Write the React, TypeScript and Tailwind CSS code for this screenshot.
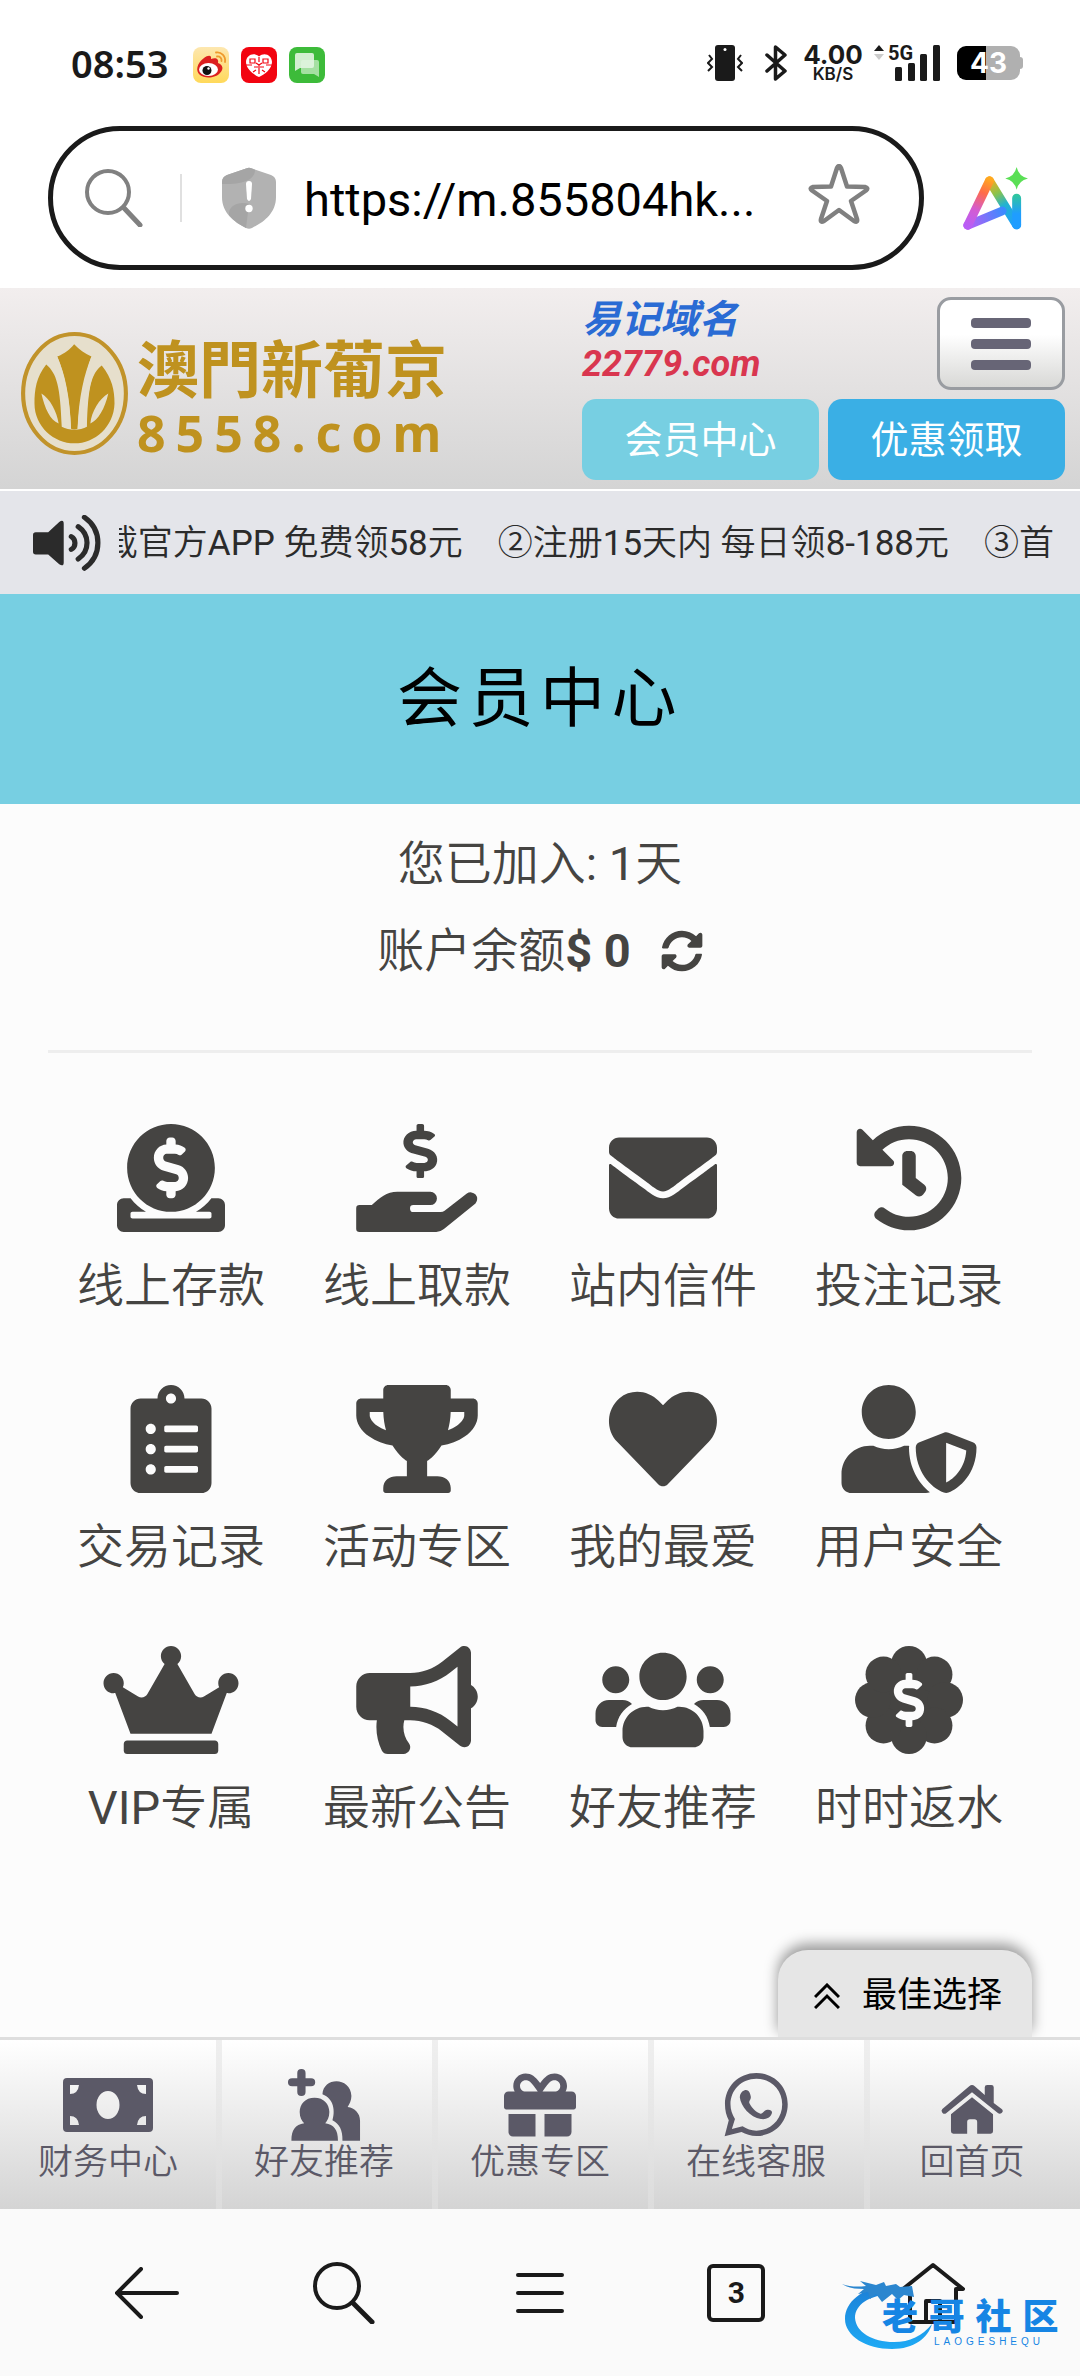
import type { ReactNode } from "react";
import {
  FaBullhorn,
  FaClipboardList,
  FaCrown,
  FaDonate,
  FaEnvelope,
  FaGift,
  FaHeart,
  FaHistory,
  FaSyncAlt,
  FaTrophy,
  FaUsers,
  FaUserShield,
} from "react-icons/fa";

const DOLLAR =
  "M209.2 233.4l-108-31.6C88.7 198.2 80 186.5 80 173.5c0-16.3 13.2-29.5 29.5-29.5h66.3c12.2 0 24.2 3.7 34.2 10.5 6.1 4.1 14.3 3.1 19.5-2l34.8-34c7.1-6.9 6.1-18.4-1.8-24.5C238 74.800 207.400 64.100 176 64V16c0-8.800-7.200-16-16-16h-32c-8.800 0-16 7.200-16 16v48h-2.500C45.800 64-5.400 118.700.500 183.600c4.200 46.100 39.400 83.600 83.800 96.600l102.500 30c12.500 3.700 21.200 15.300 21.200 28.300 0 16.300-13.200 29.500-29.500 29.500h-66.300C100 368 88 364.300 78 357.500c-6.100-4.100-14.300-3.100-19.500 2l-34.800 34c-7.100 6.900-6.100 18.400 1.800 24.500 24.500 19.200 55.100 29.900 86.500 30v48c0 8.800 7.200 16 16 16h32c8.800 0 16-7.200 16-16v-48.200c46.600-.900 90.300-28.600 105.700-72.700 21.500-61.600-14.600-124.800-72.500-141.700z";

/** Sets Chinese runs in the lighter cut while Latin letters and digits stay regular. */
function Mixed({ text }: { text: string }) {
  return (
    <>
      {text.split(/([A-Za-z0-9:\-]+)/).map((part, i) =>
        i % 2 === 1 ? (
          <span key={i} className="font-normal">
            {part}
          </span>
        ) : (
          part
        ),
      )}
    </>
  );
}

function HandDollar({ className }: { className?: string }) {
  return (
    <svg viewBox="948 132 366 325" className={className} fill="currentColor" aria-hidden="true">
      <g transform="translate(1090 132) scale(0.354 0.318)">
        <path d={DOLLAR} />
      </g>
      <path d="M958 376H995C1018 355 1040 336 1072 336H1171A20 20 0 0 1 1171 376H1120Q1110 376 1110 386Q1110 397 1120 397H1202Q1209 397 1214 393L1281 341A20 20 0 0 1 1307 371L1212 448Q1201 457 1189 457H958Q948 457 948 447V386Q948 376 958 376Z" />
    </svg>
  );
}

function BadgeDollar({ className }: { className?: string }) {
  return (
    <svg viewBox="0 0 512 512" className={className} fill="currentColor" aria-hidden="true">
      <circle cx="256" cy="256" r="180" />
      <circle cx="256" cy="85" r="85" />
      <circle cx="377" cy="135" r="85" />
      <circle cx="427" cy="256" r="85" />
      <circle cx="377" cy="377" r="85" />
      <circle cx="256" cy="427" r="85" />
      <circle cx="135" cy="377" r="85" />
      <circle cx="85" cy="256" r="85" />
      <circle cx="135" cy="135" r="85" />
      <path d={DOLLAR} fill="#fcfcfc" transform="translate(184 128) scale(0.5)" />
    </svg>
  );
}

function StatusBar() {
  return (
    <div className="flex h-[126px] items-center justify-between bg-white pr-[57px] pl-[71px] text-[#1a1a1a]">
      <div className="flex items-center">
        <span className="mr-[25px] font-['Noto_Sans',sans-serif] text-[38px] leading-none font-semibold">08:53</span>
        <div className="flex gap-3">
          <svg viewBox="0 0 36 36" className="mt-1 size-9" aria-hidden="true">
            <defs>
              <linearGradient id="wb" x1="0" y1="0" x2="0" y2="1">
                <stop offset="0" stopColor="#fde7b0" />
                <stop offset="1" stopColor="#ffd95a" />
              </linearGradient>
            </defs>
            <rect width="36" height="36" rx="8" fill="url(#wb)" />
            <path d="M11 11C15 8 19 8 18 12C23 10 26 12 25 16C30 18 31 22 27 26C23 31 12 32 7 28C2 24 4 16 11 11Z" fill="#dc1f1f" />
            <ellipse cx="15.500" cy="22.500" rx="9.500" ry="6.500" fill="#fff" />
            <circle cx="14" cy="23.500" r="4.500" fill="#111" />
            <circle cx="15.500" cy="21.500" r="1.200" fill="#fff" />
            <path d="M23 5.500C28 4.500 33 9 32 15M24 9.500C27 9 29 11.500 28.500 14" fill="none" stroke="#ef9a2d" strokeWidth="1.800" strokeLinecap="round" />
          </svg>
          <svg viewBox="0 0 36 36" className="mt-1 size-9" aria-hidden="true">
            <rect width="36" height="36" rx="8" fill="#f20410" />
            <path d="M18 9.500C23 4.500 31 8 31 15C31 22 23 28 18 30C13 28 5 22 5 15C5 8 13 4.500 18 9.500Z" fill="#fff" />
            <path d="M9 12h5v4h-5zM22 12h5v4h-5zM13 20h4M19 20h4M18 10v5M18 18v9M5 18h6M25 18h6M15 23l-3 2M21 23l3 2M15 16l3 2l3-2" fill="none" stroke="#f20410" strokeWidth="1.200" />
          </svg>
          <svg viewBox="0 0 36 36" className="mt-1 size-9" aria-hidden="true">
            <rect width="36" height="36" rx="8" fill="#3dbb3a" />
            <path d="M14 13H28Q30 13 30 15V30L25 27H14Q12 27 12 25V15Q12 13 14 13Z" fill="#a5e0a2" />
            <path d="M8 6H23Q25 6 25 8V19Q25 21 23 21H11L6 24V8Q6 6 8 6Z" fill="#e2f5e1" fillOpacity="0.900" />
          </svg>
        </div>
      </div>
      <div className="flex items-center">
        <svg viewBox="0 0 36 36" className="mr-[22px] size-9" aria-hidden="true">
          <rect x="8" width="20" height="36" rx="3" fill="#1a1a1a" />
          <circle cx="18" cy="4.500" r="1.500" fill="#fff" />
          <path d="M2 10l3 4-4 4 4 4-4 4M34 10l-3 4 4 4-4 4 4 4" fill="none" stroke="#1a1a1a" strokeWidth="2" />
        </svg>
        <svg viewBox="0 0 22 36" className="mr-4 h-9 w-[22px]" fill="none" stroke="#1a1a1a" strokeWidth="3.500" strokeLinejoin="round" strokeLinecap="round" aria-hidden="true">
          <path d="M2 10L20 26L10.500 34V2L20 10L2 26" />
        </svg>
        <div className="mr-[11px] flex w-[60px] flex-col items-center font-['Inter',sans-serif]">
          <span className="text-[26px] leading-[22px] font-bold">4.00</span>
          <span className="text-[17px] leading-4 font-semibold">KB/S</span>
        </div>
        <div className="relative mr-[17px] h-9 w-[66px]">
          <svg viewBox="0 0 66 36" className="h-9 w-[66px]" fill="#1a1a1a" aria-hidden="true">
            <path d="M0 6L5 0L10 6Z" />
            <path d="M0 9L5 15L10 9Z" fill="#ccc" />
            <rect x="21" y="22" width="7" height="14" rx="1.500" />
            <rect x="34" y="18" width="7" height="18" rx="1.500" />
            <rect x="46" y="9" width="7" height="27" rx="1.500" />
            <rect x="59" y="0" width="7" height="36" rx="1.500" />
          </svg>
          <span className="absolute top-0 left-[14px] font-['Roboto',sans-serif] text-[20px] leading-4 font-bold">5G</span>
        </div>
        <div className="flex items-center">
          <div className="flex h-[34px] w-[63px] items-center justify-center rounded-[9px] bg-[linear-gradient(90deg,#000_46%,#b0b0b0_46%)] font-['Inter',sans-serif] text-[28px] leading-none font-bold text-white">
            43
          </div>
          <div className="h-3 w-[3px] rounded-r-sm bg-[#b0b0b0]" />
        </div>
      </div>
    </div>
  );
}

function AddressBar() {
  return (
    <div className="flex items-center bg-white pr-[51px] pb-[18px] pl-12">
      <form className="flex h-36 min-w-0 flex-1 items-center rounded-full border-5 border-[#1a1a1a] pr-[49px] pl-8">
        <svg viewBox="0 0 58 58" className="size-[58px] shrink-0" fill="none" stroke="#808080" aria-hidden="true">
          <circle cx="23" cy="23" r="21" strokeWidth="4" />
          <path d="M39 39L55 56" strokeWidth="5" strokeLinecap="round" />
        </svg>
        <div className="mr-10 ml-[37px] h-12 w-0.5 shrink-0 bg-[#e0e0e0]" />
        <svg viewBox="0 0 54 62" className="mr-7 h-[62px] w-[54px] shrink-0" aria-hidden="true">
          <path d="M24 1.500Q27 0 30 1.500L49 8Q54 10 54 15V30C54 46 42 55 30 61Q27 62.500 24 61C12 55 0 46 0 30V15Q0 10 5 8Z" fill="#b2b2b2" />
          <path d="M5 8L24 1.500Q27 0 30 1.500L33 3C33 12 22 18 0 17V15Q0 10 5 8ZM27 37L24 61C18 58 12 54 7 48C6 38 18 34 27 37Z" fill="#a5a5a5" />
          <path d="M24 17Q24 14 27 14Q30 14 30 17L29 32Q27 36 25 32Z" fill="#fff" />
          <circle cx="27" cy="41.500" r="3.700" fill="#fff" />
        </svg>
        <input
          aria-label="网址"
          readOnly
          value="https://m.855804hk..."
          className="w-0 min-w-0 flex-1 bg-transparent pt-1 font-['Roboto',sans-serif] text-[47px] leading-[60px] text-black outline-none"
        />
        <button type="button" aria-label="收藏" className="ml-4 shrink-0">
          <svg viewBox="0 0 62 60" className="mb-2 h-[60px] w-[62px]" fill="none" stroke="#808080" strokeWidth="4.500" strokeLinejoin="round" aria-hidden="true">
            <path d="M29 4Q31 0 33 4L39 22.500L57 23Q61 24 58 26.500L43 37L49 55Q50 59 46 57L31 46L16 57Q12 59 13 55L19 37L4 26.500Q1 24 5 23L23 22.500Z" />
          </svg>
        </button>
      </form>
      <button type="button" aria-label="AI" className="ml-[39px] shrink-0">
        <svg viewBox="1226 500 192 188" preserveAspectRatio="none" className="h-[63px] w-[66px]" fill="none" strokeWidth="26" strokeLinecap="round" strokeLinejoin="round" aria-hidden="true">
          <defs>
            <linearGradient id="aiL" gradientUnits="userSpaceOnUse" x1="1303" y1="535" x2="1240" y2="675">
              <stop offset="0" stopColor="#ffa91f" />
              <stop offset="0.300" stopColor="#ff6b4a" />
              <stop offset="0.650" stopColor="#d45cd0" />
              <stop offset="1" stopColor="#b95df5" />
            </linearGradient>
            <linearGradient id="aiM" gradientUnits="userSpaceOnUse" x1="1240" y1="675" x2="1345" y2="630">
              <stop offset="0" stopColor="#b95df5" />
              <stop offset="1" stopColor="#3a8bff" />
            </linearGradient>
            <linearGradient id="aiR" gradientUnits="userSpaceOnUse" x1="1303" y1="535" x2="1382" y2="675">
              <stop offset="0" stopColor="#ffa91f" />
              <stop offset="0.300" stopColor="#8bc34a" />
              <stop offset="0.550" stopColor="#22b3d0" />
              <stop offset="1" stopColor="#1f9dff" />
            </linearGradient>
            <linearGradient id="aiI" gradientUnits="userSpaceOnUse" x1="1382" y1="585" x2="1382" y2="640">
              <stop offset="0" stopColor="#2fc5a0" />
              <stop offset="1" stopColor="#1f9dff" />
            </linearGradient>
          </defs>
          <path d="M1303 541L1382 673" stroke="url(#aiR)" />
          <path d="M1240 674L1340 631" stroke="url(#aiM)" />
          <path d="M1303 541L1240 674" stroke="url(#aiL)" />
          <path d="M1382 593L1382.100 673" stroke="url(#aiI)" />
          <path d="M1382 500Q1388 528 1415 534Q1388 540 1382 568Q1376 540 1349 534Q1376 528 1382 500Z" fill="#5adf55" />
        </svg>
      </button>
    </div>
  );
}

function SiteHeader() {
  return (
    <header className="flex justify-between border-b-2 border-white bg-linear-to-b from-[#f2eeee] to-[#d4d4d4] pt-[9px] pr-[15px] pb-[9px] pl-5">
      <a href="#home" className="mt-[34px] flex items-start text-[#bf921f]">
        <svg viewBox="58 152 316 376" preserveAspectRatio="none" className="h-[125px] w-[109px]" aria-hidden="true">
          <ellipse cx="216" cy="340" rx="149" ry="179" fill="#e6dfcc" stroke="#c1932a" strokeWidth="12" />
          <path d="M215 192C230 208 245 220 265 229C245 290 231 360 225 446Q215 450 206 446C202 360 190 290 166 229C188 220 202 208 215 192Z" fill="#bf921f" />
          <path d="M134 253C165 280 175 320 179 440C200 452 232 452 252 440C255 320 265 280 295 256C325 295 332 330 332 370C330 440 275 490 216 490C157 490 100 440 100 370C100 330 105 290 134 253Z" fill="#bf921f" />
          <path d="M166 229C188 280 203 350 206 446L181 440C180 360 176 310 150 262ZM265 229C245 280 228 350 225 446L250 440C252 360 258 300 282 262Z" fill="#e6dfcc" />
          <path d="M120 340C130 385 145 420 170 430C165 395 145 355 120 340ZM314 340C304 385 285 420 262 430C265 395 288 355 314 340Z" fill="#e6dfcc" />
        </svg>
        <span className="ml-2 flex flex-col">
          <span className="font-['Noto_Sans_CJK_TC',sans-serif] text-[62px] leading-[70px] font-bold">澳門新葡京</span>
          <span className="font-['Noto_Sans',sans-serif] text-[50px] leading-[64px] font-bold tracking-[0.2em]">8558.com</span>
        </span>
      </a>
      <div className="flex w-[483px] flex-col gap-[9px]">
        <div className="flex items-start justify-between">
          <a href="#domain" className="flex flex-col font-bold italic">
            <span className="text-[39px] leading-[46px] text-[#2a6bd4]">易记域名</span>
            <span className="text-[36px] leading-[42px] text-[#d9364f]">22779.com</span>
          </a>
          <button
            type="button"
            aria-label="菜单"
            className="flex h-[93px] w-32 flex-col items-center justify-center gap-[11px] rounded-[14px] border-3 border-[#999ca1] bg-linear-to-b from-white from-40% to-[#d8d8d6]"
          >
            <span className="h-[10px] w-[60px] rounded-sm bg-[#676576]" />
            <span className="h-[10px] w-[60px] rounded-sm bg-[#676576]" />
            <span className="h-[10px] w-[60px] rounded-sm bg-[#676576]" />
          </button>
        </div>
        <div className="grid grid-cols-2 gap-[9px] text-[38px] leading-none text-white">
          <button type="button" className="h-[81px] rounded-[14px] bg-[#77cfe2]">会员中心</button>
          <button type="button" className="h-[81px] rounded-[14px] bg-[#3aafe5]">优惠领取</button>
        </div>
      </div>
    </header>
  );
}

function Notice() {
  return (
    <div className="flex h-[103px] items-center bg-[#e4e5ea] pr-[26px] pl-[33px] text-[#2b2b2b]">
      <svg viewBox="97 703 197 169" preserveAspectRatio="none" className="mr-[18px] h-14 w-[68px] shrink-0" aria-hidden="true">
        <path d="M105 755H141L173 724Q186 715 186 730V846Q186 860 173 852L141 822H105Q97 822 97 814V763Q97 755 105 755Z" fill="currentColor" />
        <g fill="none" stroke="currentColor" strokeWidth="15" strokeLinecap="round">
          <path d="M208 768C222 776 222 799 208 807" />
          <path d="M228 738C262 762 262 812 228 836" />
          <path d="M246 710C298 748 298 826 246 864" />
        </g>
      </svg>
      <div className="flex min-w-0 flex-1 justify-end overflow-hidden">
        <p className="pt-0.5 text-[35px] leading-[52px] font-[350] whitespace-pre">
          <Mixed text="下载官方APP 免费领58元　②注册15天内 每日领8-188元　③首" />
        </p>
      </div>
    </div>
  );
}

const iconClass = "h-[108px] w-[140px]";

const MENU: { label: string; icon: ReactNode }[] = [
  { label: "线上存款", icon: <FaDonate className={iconClass} /> },
  { label: "线上取款", icon: <HandDollar className={iconClass} /> },
  { label: "站内信件", icon: <FaEnvelope className={iconClass} /> },
  { label: "投注记录", icon: <FaHistory className={iconClass} /> },
  { label: "交易记录", icon: <FaClipboardList className={iconClass} /> },
  { label: "活动专区", icon: <FaTrophy className={iconClass} /> },
  { label: "我的最爱", icon: <FaHeart className={iconClass} /> },
  { label: "用户安全", icon: <FaUserShield className={iconClass} /> },
  { label: "VIP专属", icon: <FaCrown className={iconClass} /> },
  { label: "最新公告", icon: <FaBullhorn className={iconClass} /> },
  { label: "好友推荐", icon: <FaUsers className={iconClass} /> },
  { label: "时时返水", icon: <BadgeDollar className={iconClass} /> },
];

const navIcon = "h-[72px] w-[90px]";

const NAV: { label: string; icon: ReactNode }[] = [
  {
    label: "财务中心",
    icon: (
      <svg viewBox="0 0 90 72" className={navIcon} fill="currentColor" aria-hidden="true">
        <path
          fillRule="evenodd"
          d="M4 9H86Q90 9 90 13V59Q90 63 86 63H4Q0 63 0 59V13Q0 9 4 9ZM45 22A11.500 14 0 0 0 45 50A11.500 14 0 0 0 45 22ZM7 16V25Q15 25 16 16ZM83 16V25Q75 25 74 16ZM7 56V47Q15 47 16 56ZM83 56V47Q75 47 74 56Z"
        />
      </svg>
    ),
  },
  {
    label: "好友推荐",
    icon: (
      <svg viewBox="810 507 261 216" preserveAspectRatio="none" className={navIcon} fill="currentColor" aria-hidden="true">
        <path d="M875 519V576M848 547H903" stroke="currentColor" strokeWidth="24" strokeLinecap="round" />
        <path d="M936 583C938 530 1018 530 1020 588C1020 602 1014 613 1009 621C1030 624 1045 640 1045 662V722H994C995 690 985 672 965 661C973 635 970 596 936 583Z" />
        <path d="M913 593C940 593 956 612 956 636C956 652 950 662 944 670C970 674 981 690 981 722H846C846 690 857 674 883 670C876 662 870 652 870 636C870 612 886 593 913 593Z" />
      </svg>
    ),
  },
  { label: "优惠专区", icon: <FaGift className={navIcon} /> },
  {
    label: "在线客服",
    icon: (
      <svg viewBox="496.500 507 261 216" preserveAspectRatio="none" className={navIcon} fill="currentColor" aria-hidden="true">
        <path
          fillRule="evenodd"
          d="M628 519C680 519 719 560 719 613C719 667 680 708 628 708C612 708 597 703 585 696L536 709L548 661C541 648 537 631 537 613C537 560 576 519 628 519ZM628 536C585 536 553 570 553 613C553 630 558 644 566 657L557 687L588 679C600 687 613 692 628 692C671 692 703 657 703 613C703 570 671 536 628 536Z"
        />
        <path d="M594 571C603 567 610 576 612 590C613 600 605 602 608 610C616 626 628 638 640 641C646 642 650 632 657 630C668 628 675 632 673 640C668 655 655 659 641 657C610 652 583 620 580 592C580 582 585 574 594 571Z" />
      </svg>
    ),
  },
  {
    label: "回首页",
    icon: (
      <svg viewBox="1123.500 507 261 216" preserveAspectRatio="none" className={navIcon} fill="currentColor" aria-hidden="true">
        <path d="M1246 559Q1254 551 1262 559L1291 585V562Q1291 555 1298 555H1310Q1317 555 1317 562V609L1341 628Q1346 634 1340 639Q1334 644 1329 639L1254 577L1179 640Q1173 644 1168 638Q1163 632 1168 627Z" />
        <path d="M1254 592L1315 643V694Q1315 701 1308 701H1269V666Q1269 658 1261 658H1248Q1240 658 1240 666V701H1200Q1193 701 1193 694V643Z" />
      </svg>
    ),
  },
];

function BottomNav() {
  return (
    <div className="relative">
      <button
        type="button"
        className="absolute right-12 bottom-full flex h-[87px] w-[254px] items-center gap-[22px] rounded-t-[30px] bg-[#e6e6e6] pt-1 pl-9 text-[35px] leading-none text-black shadow-[0_-6px_14px_rgba(0,0,0,0.4)] [clip-path:inset(-30px_-30px_0_-30px)]"
      >
        <svg viewBox="0 0 26 26" className="size-[26px]" fill="none" stroke="currentColor" strokeWidth="3" aria-hidden="true">
          <path d="M1 14L13 2L25 14M1 25L13 13L25 25" />
        </svg>
        最佳选择
      </button>
      <nav className="grid grid-cols-5 border-t-3 border-[#dedede] bg-linear-to-b from-white to-[#d4d4d4] text-[#5b5967]">
        {NAV.map((n, i) => (
          <a
            key={n.label}
            href={"#nav" + i}
            className="relative flex h-[169px] flex-col items-center pt-[29px] after:absolute after:top-0 after:-right-[6px] after:h-full after:w-[6px] after:bg-linear-to-b after:from-[#efefef] after:to-[#dcdcdc] last:after:hidden"
          >
            {n.icon}
            <span className="text-[35px] leading-[44px] font-[350]">{n.label}</span>
          </a>
        ))}
      </nav>
    </div>
  );
}

function Watermark() {
  return (
    <div className="pointer-events-none absolute right-[16px] bottom-[26px] h-[70px] w-[222px]">
      <svg viewBox="0 0 222 70" className="h-[70px] w-[222px]" aria-hidden="true">
        <defs>
          <linearGradient id="ring" x1="0" y1="0" x2="0" y2="1">
            <stop offset="0" stopColor="#1c7fd6" />
            <stop offset="1" stopColor="#1eaaf5" />
          </linearGradient>
        </defs>
        <path d="M44 6C20 8 3 22 3 39C3 56 24 69 50 69C72 69 86 58 90 44C80 56 68 62 52 62C30 62 14 52 13 38C13 24 28 16 46 14Z" fill="url(#ring)" />
        <path d="M0 4C8 7 16 7 24 6L18 1L34 5L42 2L44 6L54 4L58 7L70 6L72 17L62 15L56 20L50 14L40 22L34 14L28 19L26 12L16 14L22 9C14 9 6 8 0 4Z" fill="#2b86cf" />
      </svg>
      <div className="absolute top-5 left-10 flex flex-col text-[#1685e4]">
        <span className="text-[36px] leading-9 font-black tracking-[0.3em] whitespace-nowrap">老哥社区</span>
        <span className="pl-13 font-['Liberation_Sans',sans-serif] text-[10px] leading-3 tracking-[0.4em]">LAOGESHEQU</span>
      </div>
    </div>
  );
}

function BrowserBar() {
  return (
    <footer className="relative grid h-[167px] grid-cols-5 bg-[#fafafa] px-[49px] text-[#1a1a1a]">
      <button type="button" aria-label="返回" className="flex items-center justify-center">
        <svg viewBox="0 0 64 52" className="h-[52px] w-16" fill="none" stroke="currentColor" strokeWidth="4" strokeLinecap="round" aria-hidden="true">
          <path d="M26 2L2 26L26 50M2 26H62" />
        </svg>
      </button>
      <button type="button" aria-label="搜索" className="flex items-center justify-center">
        <svg viewBox="0 0 62 62" className="size-[62px]" fill="none" stroke="currentColor" strokeWidth="4" strokeLinecap="round" aria-hidden="true">
          <circle cx="24" cy="24" r="22" />
          <path d="M40 41L59 60" strokeWidth="5" />
        </svg>
      </button>
      <button type="button" aria-label="菜单" className="flex items-center justify-center">
        <svg viewBox="0 0 48 42" className="h-[42px] w-12" stroke="currentColor" strokeWidth="4" strokeLinecap="round" aria-hidden="true">
          <path d="M2 3H46M2 21H46M2 39H46" />
        </svg>
      </button>
      <button type="button" aria-label="标签页" className="flex items-center justify-center">
        <span className="flex size-[58px] items-center justify-center rounded-md border-4 border-current font-['Roboto',sans-serif] text-[30px] leading-none font-bold">
          3
        </span>
      </button>
      <button type="button" aria-label="主页" className="flex items-center justify-center">
        <svg viewBox="0 0 64 62" className="h-[62px] w-16" fill="none" stroke="currentColor" strokeWidth="4" strokeLinejoin="round" strokeLinecap="round" aria-hidden="true">
          <path d="M9 27H2L32 3L62 27H55V60H9ZM25 60V39H39V60" />
        </svg>
      </button>
      <Watermark />
    </footer>
  );
}

export default function App() {
  return (
    <div className="flex min-h-screen flex-col bg-[#fcfcfc] font-['Roboto','Noto_Sans_CJK_SC',sans-serif]">
      <StatusBar />
      <AddressBar />
      <SiteHeader />
      <Notice />
      <main className="flex-1 text-[#454442]">
        <h1 className="flex h-[210px] items-center justify-center bg-[#77cfe2] text-[65px] leading-none tracking-widest text-black">
          会员中心
        </h1>
        <section className="mx-12 flex flex-col items-center border-b-3 border-[#eeeeee] pt-4 pb-14 text-[47px] leading-[87px] font-[350]">
          <p>
            <Mixed text="您已加入: 1天" />
          </p>
          <p className="flex items-center">
            账户余额<b className="font-bold">$ 0</b>
            <button type="button" aria-label="刷新余额" className="ml-[30px]">
              <FaSyncAlt className="size-[42px]" />
            </button>
          </p>
        </section>
        <section className="mx-12 mt-[71px] grid grid-cols-4">
          {MENU.map((m, i) => (
            <a key={m.label} href={"#menu" + i} className="flex h-[261px] flex-col items-center">
              {m.icon}
              <span className="mt-[19px] text-[47px] leading-[70px] font-[350]">
                <Mixed text={m.label} />
              </span>
            </a>
          ))}
        </section>
      </main>
      <BottomNav />
      <BrowserBar />
    </div>
  );
}
